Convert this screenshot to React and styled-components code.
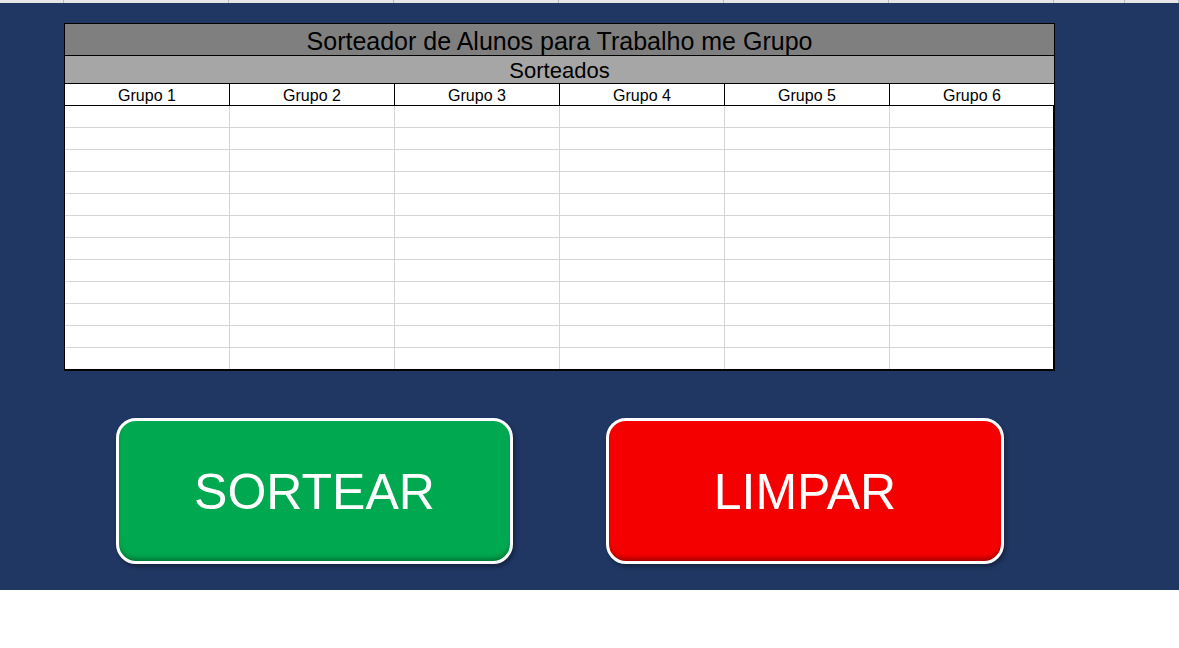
import styled, { createGlobalStyle } from "styled-components";

const GlobalStyle = createGlobalStyle`
    body {
        margin: 0;
        background: #FFFFFF;
        font-family: 'Liberation Sans', Arial, sans-serif;
    }
`;

const grupos = ['Grupo 1', 'Grupo 2', 'Grupo 3', 'Grupo 4', 'Grupo 5', 'Grupo 6'];
const linhas = Array.from({ length: 12 }, (_, i) => i);
const topCols = [64, 165, 165, 165, 165, 165, 165, 71, 54];

export default function App() {
    return (
        <>
            <GlobalStyle />
            <TopStrip>
                {topCols.map((w, i) => (<TopCell key={i} $w={w} />))}
            </TopStrip>

            <Sheet>
                <Table>
                    <Title>Sorteador de Alunos para Trabalho me Grupo</Title>
                    <Subtitle>Sorteados</Subtitle>
                    <HeadRow>
                        {grupos.map((g) => (<HeadCell key={g}>{g}</HeadCell>))}
                    </HeadRow>
                    <Body>
                        {linhas.map((l) => (
                            <Row key={l} $last={l === linhas.length - 1}>
                                {grupos.map((g) => (<Cell key={g} />))}
                            </Row>
                        ))}
                    </Body>
                </Table>

                <Buttons>
                    <Button $color="#00A84F" $dark="#007A38" $width={397}>SORTEAR</Button>
                    <Button $color="#F50000" $dark="#A80000" $width={398}>LIMPAR</Button>
                </Buttons>
            </Sheet>
        </>
    );
}

const TopStrip = styled.div`
    display: flex;
    height: 3px;
    background: #E6E6E6;
`;

const TopCell = styled.div`
    width: ${(p) => p.$w}px;
    height: 3px;
    border-right: 1px solid #BDBDBD;
    box-sizing: border-box;
    flex-shrink: 0;
`;

const Sheet = styled.div`
    display: flex;
    flex-direction: column;
    height: 587px;
    background: #203764;
    padding: 20px 0px 0px 64px;
    box-sizing: border-box;
`;

const Table = styled.div`
    display: flex;
    flex-direction: column;
    width: 991px;
    background: #FFFFFF;
    border-top: 1px solid #000000;
    border-left: 1px solid #000000;
    box-sizing: border-box;
`;

const Title = styled.div`
    height: 32px;
    background: #7F7F7F;
    border-right: 1px solid #000000;
    border-bottom: 1px solid #000000;
    box-sizing: border-box;
    display: flex;
    align-items: flex-end;
    justify-content: center;
    font-size: 25px;
    line-height: 28px;
    color: #000000;
`;

const Subtitle = styled.div`
    height: 28px;
    background: #A6A6A6;
    border-right: 1px solid #000000;
    border-bottom: 1px solid #000000;
    box-sizing: border-box;
    display: flex;
    align-items: flex-end;
    justify-content: center;
    font-size: 22px;
    line-height: 25px;
    color: #000000;
`;

const HeadRow = styled.div`
    display: grid;
    grid-template-columns: repeat(6, 165px);
    height: 22px;
    box-sizing: border-box;
    border-bottom: 1px solid #000000;
`;

const HeadCell = styled.div`
    border-right: 1px solid #000000;
    display: flex;
    align-items: flex-end;
    justify-content: center;
    font-size: 16px;
    line-height: 19px;
    color: #000000;
`;

const Body = styled.div`
    display: flex;
    flex-direction: column;
    border-right: 2px solid #000000;
    border-bottom: 2px solid #000000;
`;

const Row = styled.div`
    display: grid;
    grid-template-columns: repeat(5, 165px) 1fr;
    height: ${(p) => (p.$last ? '21px' : '22px')};
    box-sizing: border-box;
    border-bottom: ${(p) => (p.$last ? 'none' : '1px solid #D4D4D4')};
`;

const Cell = styled.div`
    border-right: 1px solid #D4D4D4;

    &:last-child {
        border-right: none;
    }
`;

const Buttons = styled.div`
    display: flex;
    gap: 93px;
    margin: 47px 0px 0px 52px;
`;

const Button = styled.div`
    display: flex;
    justify-content: center;
    align-items: center;
    width: ${(p) => p.$width}px;
    height: 146px;
    box-sizing: border-box;
    background: ${(p) => p.$color};
    border: 3px solid #FFFFFF;
    border-radius: 20px;
    box-shadow: inset 0px -5px 4px -2px ${(p) => p.$dark}, 2px 3px 4px rgba(0, 0, 0, 0.35);
    color: #FFFFFF;
    font-size: 50px;
    padding-top: 2px;
`;
